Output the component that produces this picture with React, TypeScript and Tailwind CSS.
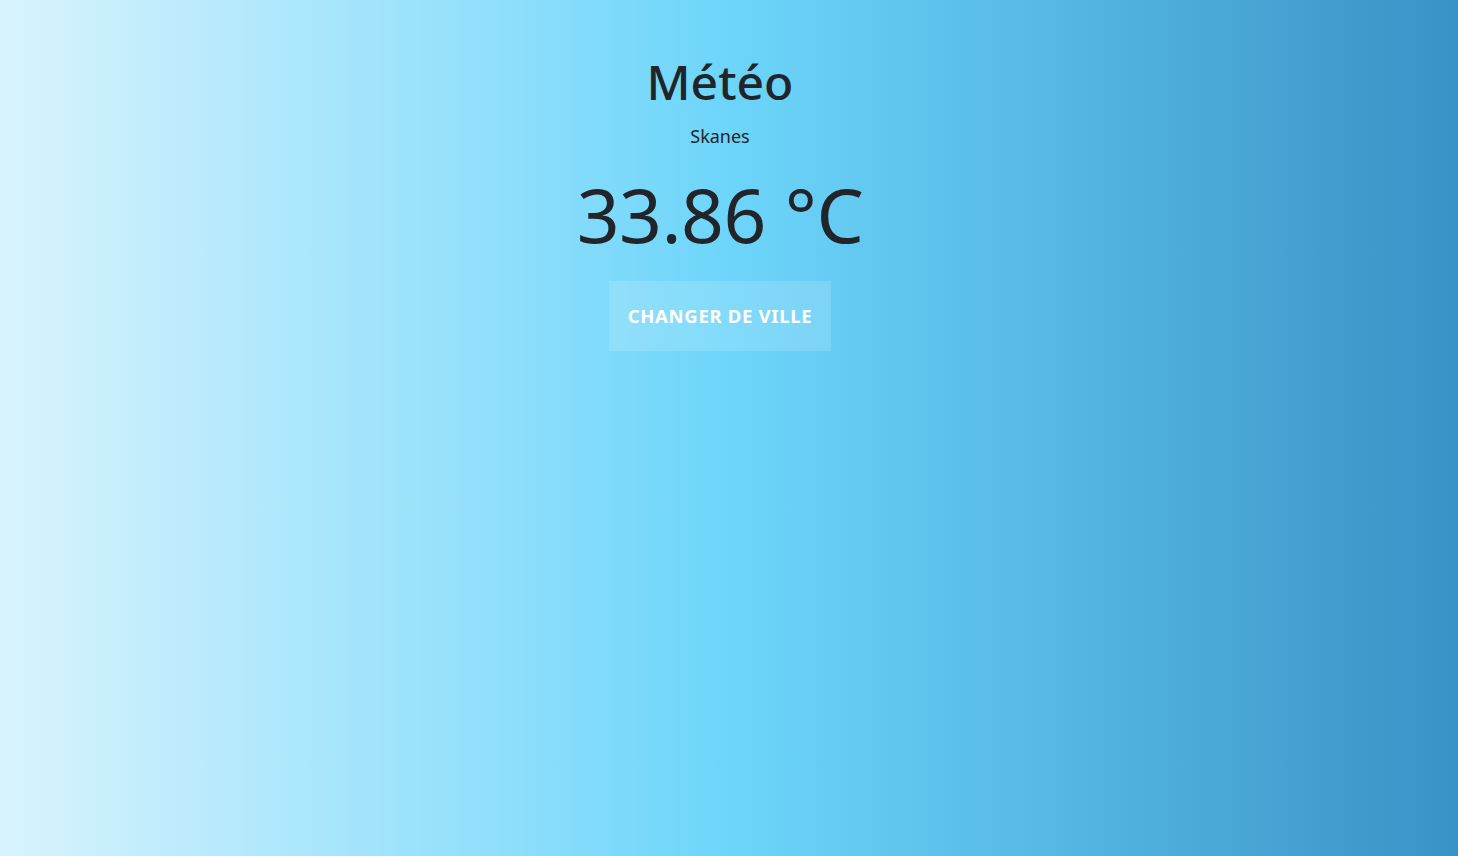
import React from "react";

export default function App() {
  const city = "Skanes";
  const temp = 33.86;

  return (
    <div className="min-h-screen w-full bg-[linear-gradient(to_right,#d8f3fd_0%,#6dd5fa_50%,#3992c6_100%)] font-['Noto_Sans',sans-serif] text-[#212529]">
      <div className="flex w-[1440px] flex-col items-center pt-[50px]">
        <h1 className="text-[48px] font-medium leading-[64px]">Météo</h1>
        <p className="mt-[10px] text-[18px] leading-[24px]">{city}</p>
        <div className="mt-[16px] text-[75px] leading-[100px] tracking-[-0.5px]">{temp} °C</div>
        <button className="mt-[17px] h-[70px] w-[222px] bg-white/15 text-[18.5px] font-bold uppercase tracking-[0.7px] text-white">
          Changer de ville
        </button>
      </div>
    </div>
  );
}
